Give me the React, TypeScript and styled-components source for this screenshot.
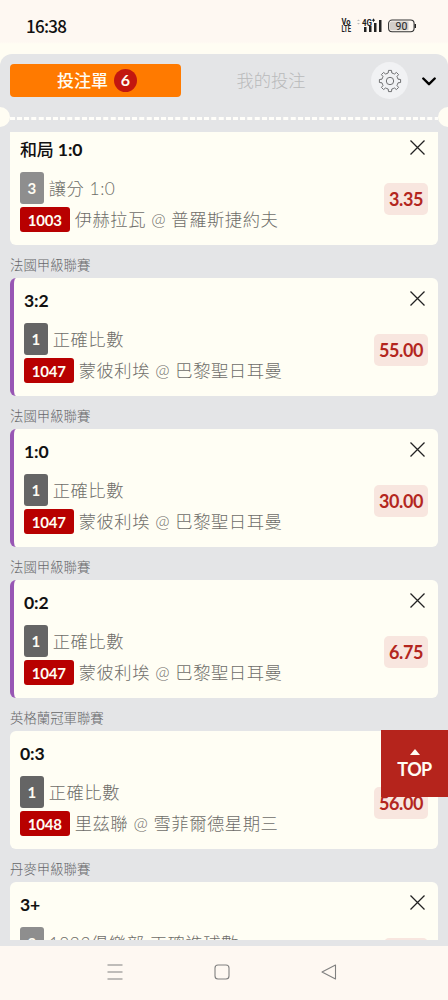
import React from 'react';
import styled, { createGlobalStyle } from 'styled-components';

const GlobalStyle = createGlobalStyle`
  * { box-sizing: border-box; }
  body {
    margin: 0;
    background: #fffdf3;
    font-family: Lato, "Noto Sans CJK TC", sans-serif;
    color: #111;
  }
  button { border: 0; padding: 0; background: none; font: inherit; color: inherit; display: block; }
  svg { display: block; }
`;

const Screen = styled.div`
  position: relative;
  width: 448px;
  height: 1000px;
  display: flex;
  flex-direction: column;
  overflow: hidden;
  background: #fffdf3;
`;

const StatusBar = styled.header`
  flex: none;
  height: 54px;
  padding: 0 32px 3px 26px;
  display: flex;
  align-items: center;
  justify-content: space-between;
  background: linear-gradient(#fef8f2 0 42px, #fffdf3 44px);
`;

const Clock = styled.time`
  font: 500 17px/20px "Noto Sans CJK TC", sans-serif;
  letter-spacing: -0.75px;
  color: #111;
`;

const StatusIcons = styled.div`
  display: flex;
  align-items: center;
`;

const Panel = styled.main`
  flex: 1;
  min-height: 0;
  display: flex;
  flex-direction: column;
  background: #e4e5e7;
  border-radius: 12px 12px 0 0;
`;

const TabBar = styled.nav`
  flex: none;
  height: 53px;
  padding: 0 12px 0 10px;
  display: flex;
  align-items: center;
`;

const Tab = styled.button<{ $active?: boolean }>`
  width: ${(p) => (p.$active ? 171 : 180)}px;
  height: 33px;
  display: flex;
  align-items: center;
  justify-content: center;
  gap: 6px;
  border-radius: 4px;
  background: ${(p) => (p.$active ? '#ff7a00' : 'transparent')};
  color: ${(p) => (p.$active ? '#fffdf3' : '#b9babb')};
  font-size: ${(p) => (p.$active ? 17 : 17.3)}px;
  font-weight: ${(p) => (p.$active ? 500 : 300)};
  line-height: 24px;
  padding-left: ${(p) => (p.$active ? 3 : 0)}px;
`;

const Count = styled.span`
  width: 23px;
  height: 23px;
  border-radius: 50%;
  background: #c2170f;
  font-size: 16px;
  font-weight: 700;
  line-height: 22px;
  text-align: center;
`;

const SettingsButton = styled.button`
  margin-left: 10px;
  width: 37px;
  height: 37px;
  display: grid;
  place-items: center;
  border-radius: 50%;
  background: #f1f2f4;
`;

const CollapseButton = styled.button`
  margin-left: 13.5px;
  padding-top: 2px;
`;

const Perforation = styled.div`
  flex: none;
  height: 20px;
  display: flex;
  align-items: center;
  overflow: hidden;
`;

const Notch = styled.span<{ $side: 'left' | 'right' }>`
  flex: none;
  width: 20px;
  height: 20px;
  border-radius: 50%;
  background: #fffdf3;
  margin: ${(p) => (p.$side === 'left' ? '0 0 0 -10px' : '0 -10px 0 0')};
`;

const Dashes = styled.span`
  flex: 1;
  height: 3px;
  margin-top: 2px;
  background: repeating-linear-gradient(90deg, #fffefa 0 4.6px, #e4e5e7 5px 6.8px, #fffefa 7.2px);
`;

const BetList = styled.section`
  flex: none;
  height: 808px;
  margin: 5px 10px 0;
  overflow: hidden;
`;

const BetStack = styled.div`
  margin-top: -37.6px;
`;

const League = styled.h2`
  margin: 0;
  height: 33px;
  padding-top: 7px;
  font-size: 13.4px;
  font-weight: 300;
  line-height: 27px;
  color: #66676a;
`;

const Card = styled.article<{ $combo?: boolean }>`
  height: 118px;
  display: flex;
  justify-content: space-between;
  padding: 0 10px;
  border-left: ${(p) => (p.$combo ? '4px solid #9857b4' : '0')};
  border-radius: 6px;
  background: #fffef4;
`;

const Details = styled.div`
  display: flex;
  flex-direction: column;
`;

const Pick = styled.h3`
  margin: 11px 0 10px;
  height: 24px;
  font-size: 17.6px;
  font-weight: 700;
  letter-spacing: -0.15px;
  line-height: 23px;
  white-space: nowrap;
`;

const CjkPick = styled.span`
  font-size: 17px;
  font-weight: 500;
`;

const Line = styled.div<{ $tall?: boolean }>`
  height: ${(p) => (p.$tall ? 32 : 25)}px;
  margin-bottom: 3px;
  display: flex;
  align-items: center;
  gap: 5px;
  font-size: 17.3px;
  font-weight: 300;
  letter-spacing: 0.55px;
  color: #6e6d69;
  white-space: nowrap;
`;

const LineText = styled.span`
  line-height: 22px;
  margin-top: 1px;
`;

const Tag = styled.span<{ $tone: 'dark' | 'mid' | 'red' }>`
  height: 100%;
  width: ${(p) => (p.$tone === 'red' ? 49.7 : 23.7)}px;
  display: grid;
  place-items: center;
  border-radius: 3px;
  background: ${(p) => ({ dark: '#656565', mid: '#8e8e8e', red: '#b80000' })[p.$tone]};
  color: #fffdf3;
  font-size: 15px;
  font-weight: 700;
  letter-spacing: -0.2px;
`;

const Side = styled.div`
  display: flex;
  flex-direction: column;
  align-items: flex-end;
`;

const RemoveButton = styled.button`
  margin: 12.4px 3px 0 0;
`;

const Odds = styled.strong`
  height: 32px;
  margin-top: 28px;
  padding: 0 5px;
  border-radius: 5px;
  background: #f8e6df;
  color: #b3261e;
  font-size: 18px;
  font-weight: 700;
  letter-spacing: -0.42px;
  line-height: 32px;
`;

const TopButton = styled.button`
  position: absolute;
  right: 0;
  top: 730px;
  width: 67px;
  height: 67px;
  display: flex;
  flex-direction: column;
  align-items: center;
  padding-top: 19px;
  background: #b5241c;
  color: #fffdf3;
  font-size: 18px;
  font-weight: 700;
  letter-spacing: -0.6px;
  line-height: 28px;
`;

const SystemNav = styled.footer`
  flex: none;
  height: 54px;
  display: flex;
  align-items: center;
  justify-content: center;
  gap: 91px;
  padding-right: 5px;
  padding-bottom: 2px;
  background: #fef8f2;
`;

interface Bet {
  league: string;
  cjk?: string;
  pick: string;
  no: string;
  tone: 'dark' | 'mid';
  market: string;
  code: string;
  match: string;
  odds: string;
  combo?: boolean;
}

const bets: Bet[] = [
  { league: '', cjk: '和局', pick: '1:0', no: '3', tone: 'mid', market: '讓分 1:0', code: '1003', match: '伊赫拉瓦 @ 普羅斯捷約夫', odds: '3.35' },
  { league: '法國甲級聯賽', pick: '3:2', no: '1', tone: 'dark', market: '正確比數', code: '1047', match: '蒙彼利埃 @ 巴黎聖日耳曼', odds: '55.00', combo: true },
  { league: '法國甲級聯賽', pick: '1:0', no: '1', tone: 'dark', market: '正確比數', code: '1047', match: '蒙彼利埃 @ 巴黎聖日耳曼', odds: '30.00', combo: true },
  { league: '法國甲級聯賽', pick: '0:2', no: '1', tone: 'dark', market: '正確比數', code: '1047', match: '蒙彼利埃 @ 巴黎聖日耳曼', odds: '6.75', combo: true },
  { league: '英格蘭冠軍聯賽', pick: '0:3', no: '1', tone: 'dark', market: '正確比數', code: '1048', match: '里茲聯 @ 雪菲爾德星期三', odds: '56.00' },
  { league: '丹麥甲級聯賽', pick: '3+', no: '2', tone: 'mid', market: '1893俱樂部 正確進球數', code: '', match: '', odds: '3.20' },
];

const toothAngles = [0, 45, 90, 135, 180, 225, 270, 315];

function gearPath() {
  const point = (r: number, deg: number) => {
    const a = (deg * Math.PI) / 180;
    return `${(12 + r * Math.sin(a)).toFixed(2)} ${(12 - r * Math.cos(a)).toFixed(2)}`;
  };
  return (
    toothAngles
      .map((a, i) => `${i ? 'A8.2 8.2 0 0 1 ' : 'M'}${point(8.2, a - 13)}L${point(10.7, a - 8)}L${point(10.7, a + 8)}L${point(8.2, a + 13)}`)
      .join('') + 'Z'
  );
}

const GearIcon = () => (
  <svg width="24" height="24" viewBox="0 0 24 24" fill="none" stroke="#6f7072" strokeWidth="1" strokeLinejoin="round">
    <path d={gearPath()} />
    <circle cx="12" cy="12" r="3.7" />
  </svg>
);

const CrossIcon = () => (
  <svg width="15" height="15" viewBox="0 0 15 15" stroke="#222" strokeWidth="1.3">
    <path d="M.5 .5l14 14M14.5 .5l-14 14" />
  </svg>
);

const SignalIcons = () => (
  <svg width="75" height="17" viewBox="0 0 75 17" fill="#222" fontFamily="Roboto, sans-serif">
    <g fontWeight="700" fontSize="9">
      <text x="0.5" y="8.2" textLength="9" lengthAdjust="spacingAndGlyphs">Vo</text>
      <text x="0.5" y="15.4" textLength="9.500" lengthAdjust="spacingAndGlyphs">LTE</text>
    </g>
    <path d="M16 4l1.5-1.5L19 4zM16 6l1.5 1.500L19 6z" fill="#bbb" />
    <text x="21" y="8.600" fontWeight="700" fontSize="9.500" textLength="10" lengthAdjust="spacingAndGlyphs">4G</text>
    <path d="M31 3.200h3M32.500 1.700v3" stroke="#222" strokeWidth="1" />
    <path d="M23 10h2.500v5h-2.500zM28 9h2.500v6h-2.500zM33 6h2.500v9h-2.500zM38 3h2.500v12h-2.500z" />
    <rect x="47.600" y="3" width="25.500" height="11.800" rx="3.500" fill="#fef8f2" stroke="#333" strokeWidth="1.100" />
    <path d="M50.500 4.500h17v8.800h-17q-1.500 0-1.500-1.500v-5.800q0-1.500 1.500-1.500z" fill="#d2cec9" />
    <path d="M73.600 7h1.400v4h-1.400z" />
    <text x="54.500" y="12.800" fontSize="10.500" fontWeight="400">90</text>
  </svg>
);

export default function App() {
  return (
    <Screen>
      <GlobalStyle />
      <StatusBar>
        <Clock>16:38</Clock>
        <StatusIcons>
          <SignalIcons />
        </StatusIcons>
      </StatusBar>
      <Panel>
        <TabBar>
          <Tab $active>
            投注單<Count>6</Count>
          </Tab>
          <Tab>我的投注</Tab>
          <SettingsButton aria-label="settings">
            <GearIcon />
          </SettingsButton>
          <CollapseButton aria-label="collapse">
            <svg width="14" height="9" viewBox="0 0 14 9" fill="none" stroke="#000" strokeWidth="2.4" strokeLinecap="round" strokeLinejoin="round">
              <path d="M1.300 1.500L7 7.200L12.700 1.500" />
            </svg>
          </CollapseButton>
        </TabBar>
        <Perforation>
          <Notch $side="left" />
          <Dashes />
          <Notch $side="right" />
        </Perforation>
        <BetList>
          <BetStack>
            {bets.map((bet, i) => (
              <React.Fragment key={i}>
                <League>{bet.league}</League>
                <Card $combo={bet.combo}>
                  <Details>
                    <Pick>
                      {bet.cjk && <CjkPick>{bet.cjk} </CjkPick>}
                      {bet.pick}
                    </Pick>
                    <Line $tall>
                      <Tag $tone={bet.tone}>{bet.no}</Tag>
                      <LineText>{bet.market}</LineText>
                    </Line>
                    {bet.code && (
                      <Line>
                        <Tag $tone="red">{bet.code}</Tag>
                        <LineText>{bet.match}</LineText>
                      </Line>
                    )}
                  </Details>
                  <Side>
                    <RemoveButton aria-label="remove">
                      <CrossIcon />
                    </RemoveButton>
                    <Odds>{bet.odds}</Odds>
                  </Side>
                </Card>
              </React.Fragment>
            ))}
          </BetStack>
        </BetList>
      </Panel>
      <TopButton>
        <svg width="10" height="6" viewBox="0 0 10 6" fill="#fffdf3">
          <path d="M0 6L5 0L10 6z" />
        </svg>
        TOP
      </TopButton>
      <SystemNav>
        <svg width="16" height="16" viewBox="0 0 16 16" stroke="#808080" strokeWidth="1.200">
          <path d="M.5 1h15M.5 8h15M.5 15h15" />
        </svg>
        <svg width="16" height="16" viewBox="0 0 16 16" fill="none" stroke="#808080" strokeWidth="1.100">
          <rect x="1" y="1" width="14" height="14" rx="3" />
        </svg>
        <svg width="16" height="16" viewBox="0 0 16 16" fill="none" stroke="#808080" strokeWidth="1.100" strokeLinejoin="round">
          <path d="M14.500 1v14L1 8z" />
        </svg>
      </SystemNav>
    </Screen>
  );
}
